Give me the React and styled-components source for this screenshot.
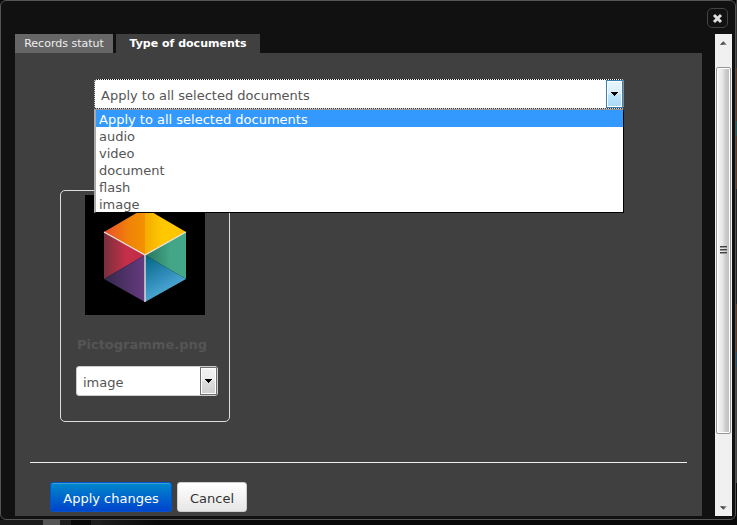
import React, { useState } from "react";
import styled, { createGlobalStyle, css } from "styled-components";

const GlobalStyle = createGlobalStyle`
  *, *::before, *::after { box-sizing: border-box; }
  body {
    margin: 0;
    background: #0a0a0a;
    font-family: Verdana, "DejaVu Sans", sans-serif;
    font-size: 13px;
    color: #555;
  }
  button, select { font: inherit; }
`;

const Page = styled.div`
  min-height: 100vh;
  display: flex;
  flex-direction: column;
  background:
    linear-gradient(
      #333 0 13%, #5a3a24 13% 23%, #1f5a58 23% 26%, #5a3a24 26% 36%,
      #222 36% 58%, #5a3a24 58% 67%, #234d66 67% 70%, #444 70% 92%, #080808 92%
    ) right / 1px 100% no-repeat,
    #0a0a0a;
`;

const Dialog = styled.section`
  flex: 1;
  display: flex;
  flex-direction: column;
  margin-right: 1px;
  background: #111;
  border: 1px solid #555;
  border-radius: 6px;
`;

const Header = styled.header`
  display: flex;
  justify-content: flex-end;
  padding: 7px 7px 6px;
`;

const CloseButton = styled.button`
  display: grid;
  place-items: center;
  width: 21px;
  height: 20px;
  padding: 0;
  border: 1px solid #444;
  border-radius: 5px;
  background: #111;
`;

const Body = styled.div`
  flex: 1;
  display: flex;
  gap: 13px;
  padding: 0 3px 3px 14px;
`;

const Content = styled.div`
  flex: 1;
  min-width: 0;
  display: flex;
  flex-direction: column;
`;

const Tabs = styled.div`
  display: flex;
  gap: 3px;
`;

const Tab = styled.button`
  height: 19px;
  min-width: ${(p) => (p.$active ? 144 : 98)}px;
  padding: 0 8px;
  border: 0;
  background: ${(p) => (p.$active ? "#404040" : "#666")};
  color: ${(p) => (p.$active ? "#fff" : "#eee")};
  font-size: 11px;
  line-height: 19px;
  font-weight: ${(p) => (p.$active ? "bold" : "normal")};
`;

const Panel = styled.div`
  flex: 1;
  display: flex;
  flex-direction: column;
  padding: 26px 15px 4px;
  background: #404040;
`;

const ApplyAll = styled.div`
  position: relative;
  margin: 0 63px 0 64px;
`;

const SelectFrame = styled.div`
  position: relative;
  display: flex;
  height: 30px;
  border: 1px solid #ccc;
  border-radius: 3px;
  background: #fff;
  ${(p) =>
    p.$focused &&
    css`
      border: 1px dotted #111;
    `}
`;

const Select = styled.select`
  flex: 1;
  min-width: 0;
  padding: 2px 6px 0;
  border: 0;
  outline: 0;
  appearance: none;
  background: transparent;
  color: #555;
`;

const Arrow = styled.span`
  display: grid;
  place-items: center;
  width: 17px;
  pointer-events: none;
  border: 1px solid ${(p) => (p.$focused ? "#3c7fb1" : "#707070")};
  box-shadow: inset 0 0 0 1px #fff;
  background: ${(p) =>
    p.$focused
      ? "linear-gradient(#e8f6fd, #d8effc 48%, #bee6fd 52%, #a7d9f5)"
      : "linear-gradient(#f2f2f2, #ebebeb 48%, #ddd 52%, #cfcfcf)"};
`;

const Menu = styled.ul`
  position: absolute;
  z-index: 1;
  top: 100%;
  left: 0;
  right: 0;
  margin: 0;
  padding: 0;
  list-style: none;
  background: #fff;
  border: 1px solid #000;
  border-top-color: #999;
  border-left: 2px solid #aaa;
`;

const Option = styled.li`
  height: 17px;
  padding: 0 3px;
  line-height: 20px;
  color: ${(p) => (p.$selected ? "#fff" : "#555")};
  background: ${(p) => (p.$selected ? "#3399ff" : "#fff")};
`;

const Card = styled.article`
  display: flex;
  flex-direction: column;
  align-items: center;
  align-self: flex-start;
  width: 170px;
  margin: 81px 0 40px 30px;
  padding: 4px 11px 25px 15px;
  border: 1px solid #ddd;
  border-radius: 5px;
`;

const Thumbnail = styled.svg`
  display: block;
  width: 120px;
  height: 120px;
  margin-right: 4px;
`;

const FileName = styled.h2`
  margin: 21px 10px 12px 0;
  font-size: 13px;
  line-height: 18px;
  color: #555;
`;

const CardSelect = styled.div`
  align-self: stretch;
`;

const Actions = styled.footer`
  display: flex;
  gap: 5px;
  margin-top: auto;
  padding: 19px 20px 0;
  border-top: 1px solid #eee;
`;

const Button = styled.button`
  height: 30px;
  min-width: ${(p) => (p.$primary ? 122 : 70)}px;
  padding: 2px 11px 0;
  white-space: nowrap;
  border: 1px solid ${(p) => (p.$primary ? "#0055cc" : "#ccc")};
  border-radius: 3px;
  color: ${(p) => (p.$primary ? "#fff" : "#333")};
  background: ${(p) =>
    p.$primary
      ? "linear-gradient(#0088cc, #0044cc)"
      : "linear-gradient(#fff, #e6e6e6)"};
  box-shadow: inset 0 1px 0 rgba(255, 255, 255, 0.2);
`;

const Scrollbar = styled.div`
  display: flex;
  flex-direction: column;
  width: 17px;
  padding: 0 1px;
  background: #f0f0f0;
`;

const ScrollButton = styled.button`
  display: grid;
  place-items: center;
  height: 17px;
  padding: 0;
  border: 0;
  background: transparent;
`;

const Track = styled.div`
  flex: 1;
  display: flex;
  flex-direction: column;
  padding: 16px 0 0;
`;

const Thumb = styled.div`
  flex-basis: 85%;
  display: grid;
  place-items: center;
  border: 1px solid #979797;
  border-radius: 2px;
  box-shadow: inset 0 0 0 1px #fff;
  background: linear-gradient(to right, #f7f7f7, #e6e6e8 45%, #d0d0d2 60%, #bcbcbf);
`;

const Backdrop = styled.div`
  display: flex;
  height: 5px;
  padding-left: 43px;
  background: linear-gradient(to right, #1b1b1b 100px, #080808 160px);
`;

const Strip = styled.span`
  width: ${(p) => p.$width}px;
  background: ${(p) => p.$color};
`;

function DownArrow() {
  return (
    <svg width="7" height="4" viewBox="0 0 7 4" shapeRendering="crispEdges" aria-hidden="true">
      <path d="M0 0h7v1H6v1H5v1H4v1H3V3H2V2H1V1H0z" fill="#000" />
    </svg>
  );
}

function ScrollArrow({ down }) {
  const id = down ? "arrow-down" : "arrow-up";
  return (
    <svg width="7" height="4" viewBox="0 0 8 4" aria-hidden="true">
      <linearGradient id={id} x1="0" x2="1">
        <stop offset="0" stopColor="#111" />
        <stop offset="1" stopColor="#999" />
      </linearGradient>
      <path d={down ? "M0 0h8L4 4z" : "M0 4h8L4 0z"} fill={`url(#${id})`} />
    </svg>
  );
}

function Cube() {
  return (
    <Thumbnail viewBox="0 0 120 120" role="img" aria-label="Pictogramme.png">
      <defs>
        <linearGradient id="orange" x1="0" x2="1">
          <stop offset="0" stopColor="#e94e2c" />
          <stop offset="0.6" stopColor="#ef8208" />
          <stop offset="1" stopColor="#f49200" />
        </linearGradient>
        <linearGradient id="yellow" x1="0" x2="1">
          <stop offset="0" stopColor="#f5ac00" />
          <stop offset="0.45" stopColor="#ffc900" />
          <stop offset="1" stopColor="#fdc300" />
        </linearGradient>
        <linearGradient id="red" x1="0" x2="1">
          <stop offset="0" stopColor="#782f3d" />
          <stop offset="0.55" stopColor="#c72f49" />
          <stop offset="1" stopColor="#bd2c48" />
        </linearGradient>
        <linearGradient id="purple" x1="0" x2="1">
          <stop offset="0" stopColor="#33284c" />
          <stop offset="1" stopColor="#663b80" />
        </linearGradient>
        <linearGradient id="blue" x1="0" y1="0" x2="0.5" y2="1">
          <stop offset="0" stopColor="#006482" />
          <stop offset="0.55" stopColor="#328dbb" />
          <stop offset="1" stopColor="#58b6de" />
        </linearGradient>
        <linearGradient id="green" x1="0" x2="1">
          <stop offset="0" stopColor="#27735d" />
          <stop offset="0.6" stopColor="#42a586" />
          <stop offset="1" stopColor="#43a789" />
        </linearGradient>
      </defs>
      <rect width="120" height="120" fill="#000" />
      <path d="M19 37 60 13V60z" fill="url(#orange)" />
      <path d="M60 13 101 37 60 60z" fill="url(#yellow)" />
      <path d="M19 37 60 60 19 84z" fill="url(#red)" />
      <path d="M19 84 60 60V107z" fill="url(#purple)" />
      <path d="M60 60 101 84 60 107z" fill="url(#blue)" />
      <path d="M101 37V84L60 60z" fill="url(#green)" />
      <path d="M19 37 60 60 101 37M60 60V107" fill="none" stroke="#f3e6df" strokeWidth="1.3" />
    </Thumbnail>
  );
}

const ALL = "Apply to all selected documents";
const TYPES = ["audio", "video", "document", "flash", "image"];

export default function App() {
  const [all, setAll] = useState(ALL);
  const [type, setType] = useState("image");
  return (
    <>
      <GlobalStyle />
      <Page>
        <Dialog role="dialog" aria-label="Type of documents">
          <Header>
            <CloseButton type="button" aria-label="Close">
              <svg width="11" height="11" viewBox="0 0 11 11" aria-hidden="true">
                <path d="m2 2 7 7M9 2 2 9" stroke="#ddd" strokeWidth="3" />
              </svg>
            </CloseButton>
          </Header>
          <Body>
            <Content>
              <Tabs role="tablist">
                <Tab type="button" role="tab" aria-selected="false">Records statut</Tab>
                <Tab type="button" role="tab" aria-selected="true" $active>Type of documents</Tab>
              </Tabs>
              <Panel role="tabpanel">
                <ApplyAll>
                  <SelectFrame $focused>
                    <Select aria-label="Type for all documents" value={all} onChange={(e) => setAll(e.target.value)}>
                      {[ALL, ...TYPES].map((t) => <option key={t}>{t}</option>)}
                    </Select>
                    <Arrow $focused><DownArrow /></Arrow>
                  </SelectFrame>
                  <Menu role="listbox" aria-label="Document types">
                    {[ALL, ...TYPES].map((t) => (
                      <Option key={t} role="option" aria-selected={t === all} $selected={t === all} onClick={() => setAll(t)}>
                        {t}
                      </Option>
                    ))}
                  </Menu>
                </ApplyAll>
                <Card>
                  <Cube />
                  <FileName>Pictogramme.png</FileName>
                  <CardSelect>
                    <SelectFrame>
                      <Select aria-label="Type of Pictogramme.png" value={type} onChange={(e) => setType(e.target.value)}>
                        {TYPES.map((t) => <option key={t}>{t}</option>)}
                      </Select>
                      <Arrow><DownArrow /></Arrow>
                    </SelectFrame>
                  </CardSelect>
                </Card>
                <Actions>
                  <Button type="button" $primary>Apply changes</Button>
                  <Button type="button">Cancel</Button>
                </Actions>
              </Panel>
            </Content>
            <Scrollbar>
              <ScrollButton type="button" aria-label="Scroll up"><ScrollArrow /></ScrollButton>
              <Track>
                <Thumb>
                  <svg width="7" height="9" viewBox="0 0 7 9" shapeRendering="crispEdges" aria-hidden="true">
                    <path d="M0 0h7v1H0zM0 3h7v1H0zM0 6h7v1H0z" fill="#444" />
                    <path d="M0 1h7v1H0zM0 4h7v1H0zM0 7h7v1H0z" fill="#999" />
                  </svg>
                </Thumb>
              </Track>
              <ScrollButton type="button" aria-label="Scroll down"><ScrollArrow down /></ScrollButton>
            </Scrollbar>
          </Body>
        </Dialog>
        <Backdrop>
          <Strip $width={17} $color="#555" />
          <Strip $width={11} $color="#1d1d1d" />
          <Strip $width={20} $color="#080808" />
          <Strip $width={10} $color="#1d1d1d" />
        </Backdrop>
      </Page>
    </>
  );
}
